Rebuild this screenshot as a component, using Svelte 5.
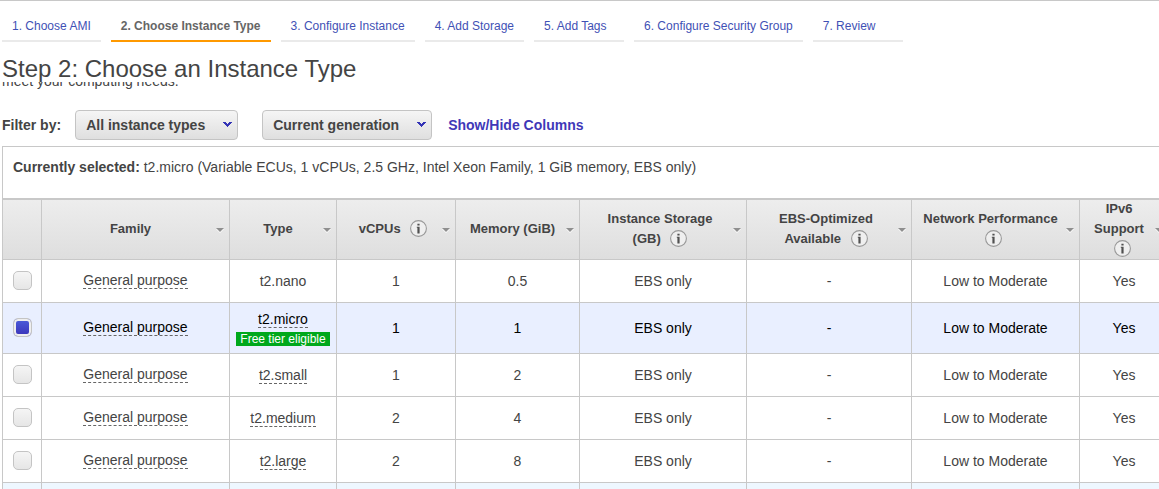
<script>
  const steps = [
    '1. Choose AMI',
    '2. Choose Instance Type',
    '3. Configure Instance',
    '4. Add Storage',
    '5. Add Tags',
    '6. Configure Security Group',
    '7. Review'
  ];
  const currentStep = 1;

  const columns = [
    { label: 'Family' },
    { label: 'Type' },
    { label: 'vCPUs', info: 'inline' },
    { label: 'Memory (GiB)' },
    { label: 'Instance Storage\n(GB)', info: 'inline' },
    { label: 'EBS-Optimized\nAvailable', info: 'inline' },
    { label: 'Network Performance', info: 'below' },
    { label: 'IPv6 Support', info: 'below' }
  ];
  const widths = [39, 188, 107, 119, 124, 167, 165, 168, 89];

  const rows = [
    { type: 't2.nano', cpu: 1, mem: '0.5', plain: true },
    { type: 't2.micro', cpu: 1, mem: '1', free: true },
    { type: 't2.small', cpu: 1, mem: '2' },
    { type: 't2.medium', cpu: 2, mem: '4' },
    { type: 't2.large', cpu: 2, mem: '8' }
  ];

  let selected = $state('t2.micro');
</script>

{#snippet chevron()}
  <svg class="chevron" width="9" height="5" viewBox="0 0 9 5" aria-hidden="true" shape-rendering="crispEdges">
    <path d="M0 0h3v1h-3zM6 0h3v1h-3zM1 1h3v1h-3zM5 1h3v1h-3zM2 2h5v1h-5zM3 3h3v1h-3zM4 4h1v1h-1z" fill="#3333b5" />
  </svg>
{/snippet}

{#snippet infoIcon()}
  <svg class="info" width="17" height="17" viewBox="0 0 17 17" aria-hidden="true">
    <circle cx="8.5" cy="8.5" r="7.9" fill="#efefef" stroke="#999" stroke-width="1.1" />
    <path d="M7.4 3.8h2.2v1.8h-2.2zM6.8 6.8h2.8v6.6h-2.2v-5.6h-.6z" fill="#505050" />
  </svg>
{/snippet}

<div class="page">
  <nav class="steps">
    {#each steps as step, i}
      <a href="#step{i + 1}" class:current={i === currentStep}>{step}</a>
    {/each}
  </nav>
  <h1>Step 2: Choose an Instance Type</h1>
  <main>
    <p class="intro">meet your computing needs.</p>

    <div class="filters">
      <label for="types">Filter by:</label>
      <div class="picker">
        <select id="types"><option>All instance types</option></select>
        {@render chevron()}
      </div>
      <div class="picker second">
        <select id="generation" aria-label="Generation"><option>Current generation</option></select>
        {@render chevron()}
      </div>
      <button class="columns" type="button">Show/Hide Columns</button>
    </div>

    <section class="grid">
      <p class="summary">
        <b>Currently selected:</b> t2.micro (Variable ECUs, 1 vCPUs, 2.5 GHz, Intel Xeon Family, 1 GiB memory, EBS only)
      </p>
      <table>
        <colgroup>
          {#each widths as w}<col style="width: {w}px" />{/each}
        </colgroup>
        <thead>
          <tr>
            <th></th>
            {#each columns as col}
              <th class:with-info={col.info === 'inline'}>
                <div class="title">
                  <span class="label">{col.label}</span>
                  {#if col.info}{@render infoIcon()}{/if}
                </div>
                <svg class="sort" width="8" height="5" viewBox="0 0 8 5" aria-hidden="true">
                  <path d="M0 1h8L4 5z" fill="#fff" />
                  <path d="M0 0h8L4 4z" fill="#8f8f8f" />
                </svg>
              </th>
            {/each}
          </tr>
        </thead>
        <tbody>
          {#each rows as row}
            <tr class:selected={selected === row.type}>
              <td>
                <input type="radio" name="instance" value={row.type} aria-label={row.type} bind:group={selected} />
              </td>
              <td><span class="family">General purpose</span></td>
              <td>
                <span class:term={!row.plain}>{row.type}</span>
                {#if row.free}<span class="badge">Free tier eligible</span>{/if}
              </td>
              <td>{row.cpu}</td>
              <td>{row.mem}</td>
              <td>EBS only</td>
              <td>-</td>
              <td>Low to Moderate</td>
              <td>Yes</td>
            </tr>
          {/each}
          <tr class="next">
            {#each widths as _}<td></td>{/each}
          </tr>
        </tbody>
      </table>
    </section>
  </main>
</div>

<style>
  .page {
    box-sizing: border-box;
    display: flex;
    flex-direction: column;
    height: 100vh;
    overflow: hidden;
    padding-left: 2px;
    border-top: 1px solid #c8c8c8;
    background: #fff;
    color: #444;
    font: 14px/20px "Liberation Sans", Arial, sans-serif;
  }
  .steps {
    display: flex;
    flex: none;
    gap: 10px;
    padding-top: 15px;
    font-size: 12px;
  }
  .steps a {
    box-sizing: border-box;
    min-width: 90px;
    padding: 0 10px 4px;
    border-bottom: 2px solid #eaeaea;
    color: #3f51b5;
    text-decoration: none;
    white-space: nowrap;
  }
  .steps .current {
    border-color: #f90;
    color: #666;
    font-weight: bold;
  }
  h1 {
    position: relative;
    z-index: 1;
    flex: none;
    margin: 13px 0 -1px;
    font-size: 24px;
    font-weight: normal;
    line-height: 28px;
  }
  main {
    flex: 1;
    min-height: 0;
    overflow: hidden;
  }
  .intro {
    margin: -11px 0 0;
  }
  .filters {
    display: flex;
    align-items: center;
    margin-top: 19px;
    font-weight: bold;
  }
  .picker {
    position: relative;
    margin-left: 14px;
  }
  .second {
    margin: 0 16px 0 24px;
  }
  select {
    appearance: none;
    display: block;
    height: 30px;
    padding: 0 31px 0 10px;
    border: 1px solid #c4c4c4;
    border-radius: 4px;
    background: linear-gradient(#f5f5f5, #dfdfdf);
    color: #444;
    font: inherit;
  }
  .chevron {
    position: absolute;
    top: 12px;
    right: 6px;
    pointer-events: none;
  }
  .columns {
    padding: 0;
    border: 0;
    background: none;
    color: #3f38b8;
    font: inherit;
    cursor: pointer;
  }
  .grid {
    margin-top: 6px;
    border-top: 1px solid #c8c8c8;
  }
  .summary {
    margin: 0;
    padding: 10px 10px 21px;
    border-left: 1px solid #c8c8c8;
  }
  table {
    width: calc(100% + 9px);
    table-layout: fixed;
    border-top: 2px solid #c8c8c8;
    border-spacing: 0;
    text-align: center;
  }
  th,
  td {
    border: solid #c8c8c8;
    border-width: 0 0 1px 1px;
  }
  th {
    position: relative;
    box-sizing: border-box;
    height: 60px;
    padding: 0 20px 0 10px;
    background: linear-gradient(#ededed, #dedede);
    font-size: 13px;
    line-height: 20px;
  }
  th.with-info {
    padding: 0 16px 0 10px;
  }
  .title {
    margin-top: -1px;
  }
  .label {
    white-space: pre-line;
  }
  .info {
    margin: -2px 0 -2px 6px;
    vertical-align: -2px;
  }
  .sort {
    position: absolute;
    top: 28px;
    right: 5px;
  }
  td {
    height: 42px;
    padding: 0;
  }
  .selected td {
    height: 50px;
    background: #e9efff;
    color: #000;
  }
  .next td {
    background: #eef7ff;
  }
  input {
    appearance: none;
    display: block;
    box-sizing: border-box;
    width: 19px;
    height: 19px;
    margin: 0 auto 2px;
    border: 1px solid #c4c4c4;
    border-radius: 5px;
    background: linear-gradient(#f5f5f5, #e6e6e6);
  }
  input:checked {
    background: linear-gradient(#4c5edb, #3a32b8);
    box-shadow: inset 0 0 0 2px #eee;
  }
  .family {
    display: inline-block;
    border-bottom: 1px dashed #666;
    line-height: 16px;
    vertical-align: 1px;
  }
  .term {
    border-bottom: 1px dashed #666;
  }
  .badge {
    display: block;
    width: max-content;
    margin: 3px auto 2px;
    padding: 0 4px;
    background: #00a81c;
    color: #fff;
    font-size: 12px;
    line-height: 14px;
  }
</style>
